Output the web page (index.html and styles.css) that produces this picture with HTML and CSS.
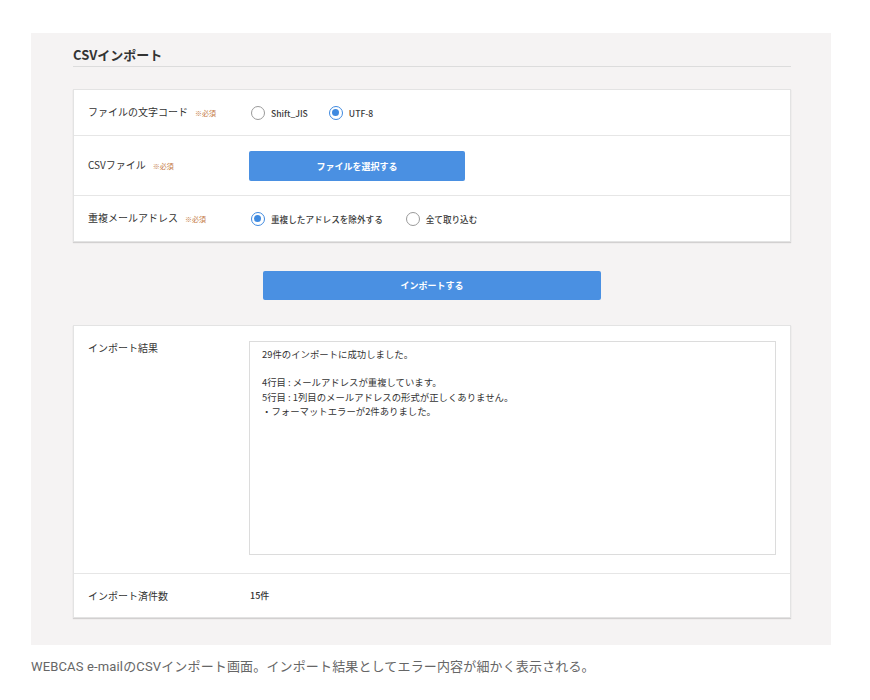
FILE: index.html
```html
<!DOCTYPE html>
<html lang="ja">
<head>
<meta charset="utf-8">
<title>CSVインポート</title>
<link rel="stylesheet" href="styles.css">
</head>
<body>
<div class="panel">
  <h1 class="title">CSVインポート</h1>

  <div class="card">
    <div class="row row-a">
      <div class="label">ファイルの文字コード<span class="req">※必須</span></div>
      <div class="value">
        <label class="radio"><span class="dot"></span>Shift_JIS</label>
        <label class="radio"><span class="dot on"></span>UTF-8</label>
      </div>
    </div>
    <div class="row row-b">
      <div class="label">CSVファイル<span class="req">※必須</span></div>
      <div class="value">
        <button class="btn btn-file">ファイルを選択する</button>
      </div>
    </div>
    <div class="row row-a">
      <div class="label">重複メールアドレス<span class="req">※必須</span></div>
      <div class="value">
        <label class="radio gap2"><span class="dot on"></span>重複したアドレスを除外する</label>
        <label class="radio"><span class="dot"></span>全て取り込む</label>
      </div>
    </div>
  </div>

  <div class="actions">
    <button class="btn btn-import">インポートする</button>
  </div>

  <div class="card">
    <div class="row row-result">
      <div class="label">インポート結果</div>
      <div class="value">
        <div class="result">29件のインポートに成功しました。<br><br>4行目 : メールアドレスが重複しています。<br>5行目 : 1列目のメールアドレスの形式が正しくありません。<br>・フォーマットエラーが2件ありました。</div>
      </div>
    </div>
    <div class="row row-count">
      <div class="label">インポート済件数</div>
      <div class="value count">15件</div>
    </div>
  </div>
</div>
<p class="caption">WEBCAS e-mailのCSVインポート画面。インポート結果としてエラー内容が細かく表示される。</p>
</body>
</html>
```

FILE: styles.css
```css
* { box-sizing: border-box; }
html, body { margin: 0; padding: 0; background: #fff; }
body {
  padding: 33px 0 0 31px;
  font-family: "Noto Sans CJK JP", "Noto Sans", sans-serif;
  color: #333;
}
.panel {
  width: 800px;
  height: 612px;
  background: #f5f3f3;
  padding: 12px 40px 0 42px;
}
.title {
  margin: 0;
  font-size: 13px;
  line-height: 20px;
  font-weight: 700;
  color: #333;
  padding-bottom: 1px;
  border-bottom: 1px solid #dcdcdc;
}
.card {
  margin-top: 22px;
  background: #fff;
  border: 1px solid #e3e3e3;
  box-shadow: 0 1px 1px rgba(0,0,0,0.14);
}
.row {
  display: flex;
  align-items: center;
  padding: 0 14px;
}
.row + .row { border-top: 1px solid #e6e6e6; }
.row-a { height: 45px; }
.row + .row-a { height: 46px; }
.row-b { height: 60px; }
.label {
  width: 161px;
  flex: none;
  font-size: 10px;
  line-height: 14px;
  color: #333;
}
.req {
  margin-left: 7px;
  font-size: 7px;
  color: #c4793f;
}
.value { flex: 1; display: flex; align-items: center; }
.radio {
  display: flex;
  align-items: center;
  font-size: 8.6px;
  font-weight: 500;
  color: #3a3a3a;
  margin-left: 2px;
  margin-right: 19px;
}
.radio.gap2 { margin-right: 21px; }
.dot {
  width: 14px;
  height: 14px;
  border-radius: 50%;
  border: 1px solid #9a9a9a;
  background: #fff;
  margin-right: 6px;
  position: relative;
}
.dot.on { border: 1.5px solid #3f8ae0; }
.dot.on::after {
  content: "";
  position: absolute;
  left: 2px; top: 2px;
  width: 7px; height: 7px;
  border-radius: 50%;
  background: #3f8ae0;
}
.btn {
  border: 0;
  border-radius: 2px;
  background: #4a90e2;
  color: #fff;
  font-family: "Noto Sans CJK JP", sans-serif;
  font-size: 9px;
  font-weight: 700;
  padding: 0;
  cursor: pointer;
}
.btn-file { width: 216px; height: 30px; margin-top: 1px; }
.actions {
  display: flex;
  justify-content: center;
  margin-top: 29px;
}
.btn-import { width: 338px; height: 29px; }
.actions + .card { margin-top: 25px; }
.row-result {
  align-items: flex-start;
  padding-top: 15px;
  padding-bottom: 18px;
}
.result {
  width: 527px;
  height: 214px;
  border: 1px solid #dcdcdc;
  padding: 5px 12px;
  font-size: 9.4px;
  line-height: 14.2px;
  color: #333;
}
.row-count { height: 44px; }
.count { font-size: 9px; font-weight: 500; padding-left: 1px; }
.caption {
  margin: 12px 0 0;
  font-family: Roboto, "Noto Sans CJK JP", sans-serif;
  font-size: 13px;
  line-height: 20px;
  color: #666;
  font-weight: 400;
  letter-spacing: 0.15px;
}
```
